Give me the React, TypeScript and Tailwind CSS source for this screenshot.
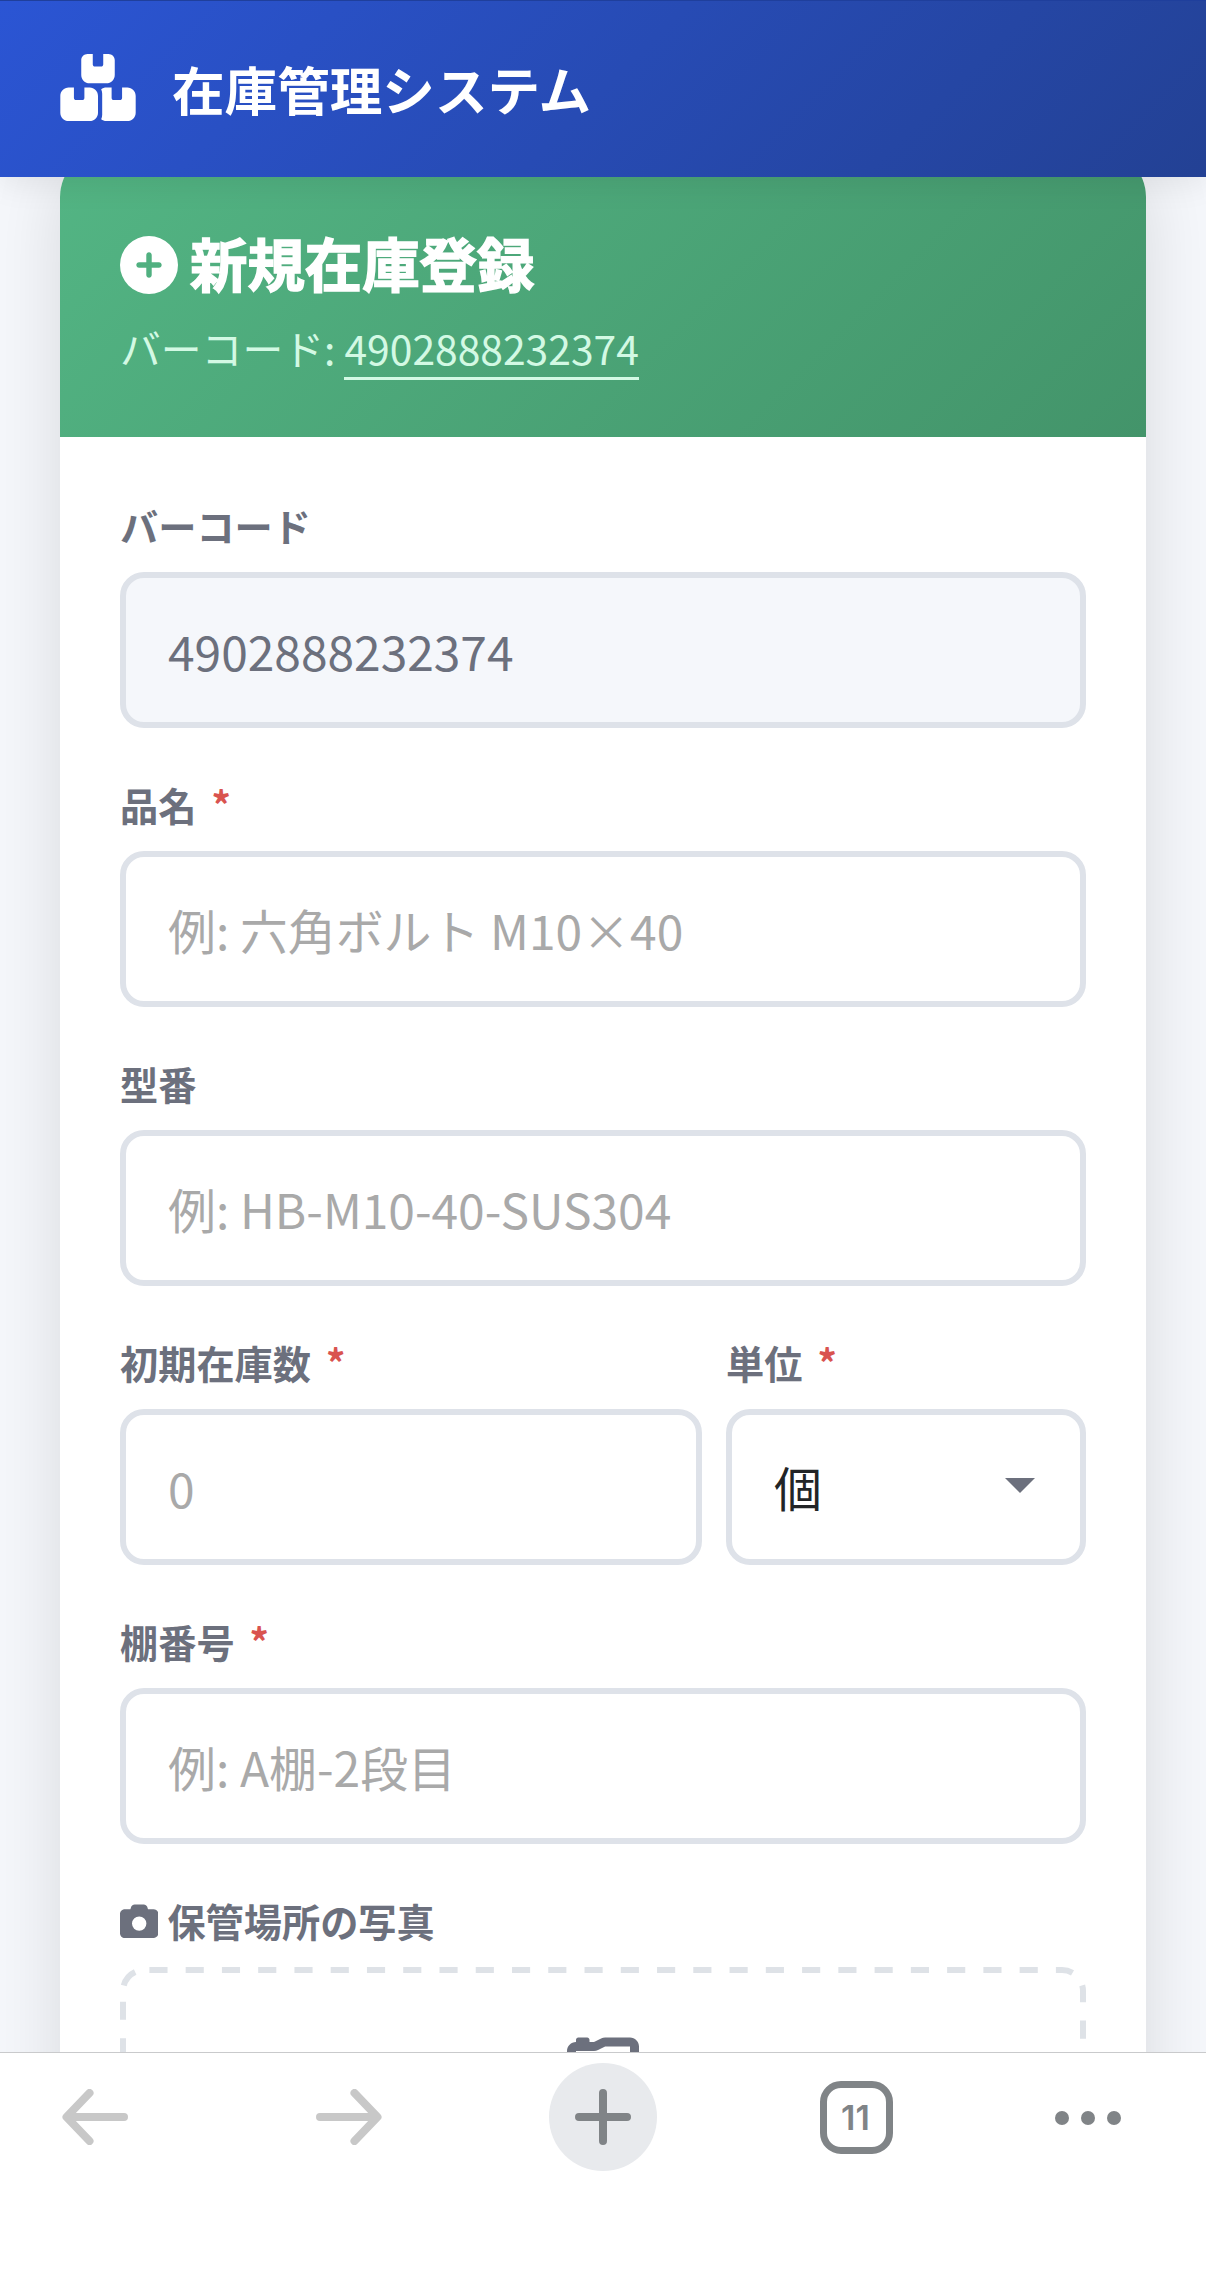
import type { ReactNode } from 'react'
import { FaBoxesStacked, FaCamera, FaCameraRetro, FaCirclePlus } from 'react-icons/fa6'

const inputClass =
  'block h-[156px] w-full rounded-[24px] border-[6px] border-[#dee2e9] px-[42px] text-[47.9px] outline-none placeholder:text-[#a9a9a9]'

type FieldProps = {
  label: ReactNode
  required?: boolean
  className?: string
  children: ReactNode
}

function Field({ label, required, className = '', children }: FieldProps) {
  return (
    <div className={className}>
      <label className="mb-[17px] flex h-[58px] items-center pt-[1px] text-[38.2px] leading-none font-bold text-[#6c707d]">
        {label}
        {required && <span className="-mt-[3px] ml-[15px] text-[#d9534f]">*</span>}
      </label>
      {children}
    </div>
  )
}

function AppHeader() {
  return (
    <header className="relative z-10 flex h-[177px] shrink-0 items-center gap-[36px] border-t border-[#1f3f9c] bg-[linear-gradient(135deg,#2b55d4,#234194)] px-[60px] text-white shadow-[0_6px_30px_rgba(0,0,0,0.08)]">
      <FaBoxesStacked className="-mt-[3px] h-[67px] w-[76px]" />
      <h1 className="-mt-[1px] text-[52.6px] leading-none font-bold">在庫管理システム</h1>
    </header>
  )
}

function CardHeader() {
  return (
    <div className="h-[288px] bg-[linear-gradient(135deg,#53b584,#43946a)] px-[60px] pt-[73px]">
      <h2 className="flex h-[86px] items-center gap-[12px] text-[57.4px] leading-none font-bold text-white">
        <FaCirclePlus className="h-[58px] w-[58px]" />
        <span className="-mt-[4px] [-webkit-text-stroke:1.5px_white]">新規在庫登録</span>
      </h2>
      <p className="mt-[10px] text-[40.8px] leading-[59px] text-[#d3f9e4]">
        バーコード:{' '}
        <span className="inline-block border-b-[3px] border-[#d3f9e4]">4902888232374</span>
      </p>
    </div>
  )
}

function PhotoDropzone() {
  return (
    <div className="relative flex h-[360px] justify-center pt-[66px]">
      <svg className="absolute inset-0" width="966" height="360" viewBox="0 0 966 360" fill="none" stroke="#dee2e7" strokeWidth="6">
        <path d="M29.400 3H936" strokeDasharray="18.130 18.130" />
        <path d="M936 3h6a21 21 0 0 1 21 21v312" strokeDasharray="17 16 17 18.300 18.300 18.300 18.300 18.300" />
        <path d="M29.400 3H24A21 21 0 0 0 3 24v312" strokeDasharray="0 14.500 18 16.500 18 18.300 18.300 18.300 18.300 18.300" />
      </svg>
      <FaCameraRetro className="h-[72px] w-[72px] text-[#6c707d]" />
    </div>
  )
}

function BrowserBar() {
  return (
    <nav className="relative z-10 h-[234px] shrink-0 border-t border-[#c9cacc] bg-white">
      <div className="flex h-[128px] items-center pl-[62px]">
        <svg width="66" height="56" viewBox="0 0 66 56" fill="none" stroke="#c8c8c8" strokeWidth="8" strokeLinecap="round" strokeLinejoin="round">
          <path d="M62 28H5M27.500 4L4.500 28l23 24" />
        </svg>
        <svg className="ml-[188px]" width="66" height="56" viewBox="0 0 66 56" fill="none" stroke="#c8c8c8" strokeWidth="8" strokeLinecap="round" strokeLinejoin="round">
          <path d="M4 28h57M38.500 4l23 24-23 24" />
        </svg>
        <div className="ml-[167px] flex h-[108px] w-[108px] items-center justify-center rounded-full bg-[#e8eaed]">
          <svg width="56" height="56" viewBox="0 0 56 56" fill="none" stroke="#808487" strokeWidth="8" strokeLinecap="round">
            <path d="M4 28h48M28 4v48" />
          </svg>
        </div>
        <div className="mt-[1px] ml-[163px] flex h-[73px] w-[73px] items-center justify-center rounded-[21px] border-[7px] border-[#808487] pr-[2px] font-['Inter',sans-serif] text-[34px] leading-none font-semibold text-[#808487]">
          11
        </div>
        <div className="ml-[162px] flex gap-[12px] pt-[1px]">
          <span className="h-[14px] w-[14px] rounded-full bg-[#808487]" />
          <span className="h-[14px] w-[14px] rounded-full bg-[#808487]" />
          <span className="h-[14px] w-[14px] rounded-full bg-[#808487]" />
        </div>
      </div>
    </nav>
  )
}

export default function App() {
  return (
    <div className="flex h-[2286px] w-[1206px] flex-col overflow-hidden bg-[#f5f7fb] font-['Noto_Sans_CJK_JP',sans-serif]">
      <AppHeader />
      <main className="min-h-0 flex-1 px-[60px]">
        <div className="-mt-[28px] overflow-hidden rounded-[48px] bg-white shadow-[0_12px_72px_rgba(0,0,0,0.12)]">
          <CardHeader />
          <form className="flex flex-col gap-[48px] px-[60px] py-[60px]">
            <Field label="バーコード">
              <input className={`${inputClass} bg-[#f5f7fb] text-[#6c707d]`} defaultValue="4902888232374" readOnly />
            </Field>
            <Field label="品名" required>
              <input className={inputClass} placeholder="例: 六角ボルト M10×40" />
            </Field>
            <Field label="型番">
              <input className={inputClass} placeholder="例: HB-M10-40-SUS304" />
            </Field>
            <div className="flex gap-[24px]">
              <Field label="初期在庫数" required className="w-[582px]">
                <input className={inputClass} placeholder="0" />
              </Field>
              <Field label="単位" required className="w-[360px]">
                <div className="relative">
                  <select className={`${inputClass} appearance-none text-[#222426]`} defaultValue="個">
                    <option>個</option>
                  </select>
                  <svg className="pointer-events-none absolute top-[69px] right-[51px]" width="30" height="15" viewBox="0 0 30 15">
                    <path d="M0 0h30L15 15z" fill="#6c707d" />
                  </svg>
                </div>
              </Field>
            </div>
            <Field label="棚番号" required>
              <input className={inputClass} placeholder="例: A棚-2段目" />
            </Field>
            <Field
              label={
                <>
                  <FaCamera className="mr-[9px] h-[38.4px] w-[38.4px]" />
                  保管場所の写真
                </>
              }
            >
              <PhotoDropzone />
            </Field>
          </form>
        </div>
      </main>
      <BrowserBar />
    </div>
  )
}
